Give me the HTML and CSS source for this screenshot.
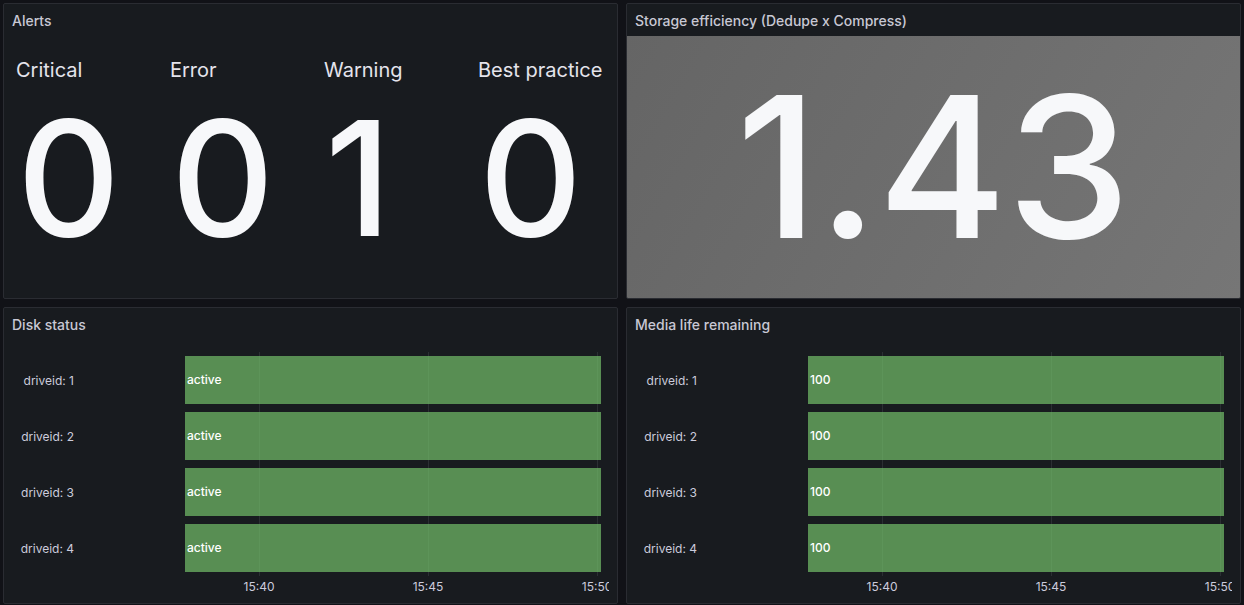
FILE: index.html
```html
<!DOCTYPE html>
<html lang="en">
<head>
<meta charset="utf-8">
<title>Storage dashboard</title>
<link rel="stylesheet" href="styles.css">
</head>
<body>
<main class="dash">
  <section class="panel">
    <header class="panel-head"><h2 class="panel-title">Alerts</h2></header>
    <div class="panel-body stat-grid">
      <div class="stat"><div class="stat-name">Critical</div><div class="stat-val">0</div></div>
      <div class="stat"><div class="stat-name">Error</div><div class="stat-val">0</div></div>
      <div class="stat"><div class="stat-name">Warning</div><div class="stat-val">1</div></div>
      <div class="stat"><div class="stat-name">Best practice</div><div class="stat-val">0</div></div>
    </div>
  </section>

  <section class="panel">
    <header class="panel-head"><h2 class="panel-title">Storage efficiency (Dedupe x Compress)</h2></header>
    <div class="panel-body eff-body">
      <div class="eff-val">1.43</div>
    </div>
  </section>

  <section class="panel">
    <header class="panel-head"><h2 class="panel-title">Disk status</h2></header>
    <div class="panel-body tl-body">
      <div class="tl-plot">
        <div class="tl-labels">
          <div class="tl-label">driveid: 1</div>
          <div class="tl-label">driveid: 2</div>
          <div class="tl-label">driveid: 3</div>
          <div class="tl-label">driveid: 4</div>
        </div>
        <div class="tl-area">
          <div class="tl-rows">
            <div class="grid-line" style="left:17.79%"></div>
            <div class="grid-line" style="left:58.41%"></div>
            <div class="grid-line" style="left:99.04%"></div>
            <div class="tl-row"><div class="tl-bar">active</div></div>
            <div class="tl-row"><div class="tl-bar">active</div></div>
            <div class="tl-row"><div class="tl-bar">active</div></div>
            <div class="tl-row"><div class="tl-bar">active</div></div>
          </div>
          <div class="tl-axis">
            <span class="tick" style="left:17.79%">15:40</span>
            <span class="tick" style="left:58.41%">15:45</span>
            <span class="tick" style="left:99.04%">15:50</span>
          </div>
        </div>
      </div>
    </div>
  </section>

  <section class="panel">
    <header class="panel-head"><h2 class="panel-title">Media life remaining</h2></header>
    <div class="panel-body tl-body">
      <div class="tl-plot">
        <div class="tl-labels">
          <div class="tl-label">driveid: 1</div>
          <div class="tl-label">driveid: 2</div>
          <div class="tl-label">driveid: 3</div>
          <div class="tl-label">driveid: 4</div>
        </div>
        <div class="tl-area">
          <div class="tl-rows">
            <div class="grid-line" style="left:17.79%"></div>
            <div class="grid-line" style="left:58.41%"></div>
            <div class="grid-line" style="left:99.04%"></div>
            <div class="tl-row"><div class="tl-bar">100</div></div>
            <div class="tl-row"><div class="tl-bar">100</div></div>
            <div class="tl-row"><div class="tl-bar">100</div></div>
            <div class="tl-row"><div class="tl-bar">100</div></div>
          </div>
          <div class="tl-axis">
            <span class="tick" style="left:17.79%">15:40</span>
            <span class="tick" style="left:58.41%">15:45</span>
            <span class="tick" style="left:99.04%">15:50</span>
          </div>
        </div>
      </div>
    </div>
  </section>
</main>
</body>
</html>
```

FILE: styles.css
```css
* { box-sizing: border-box; }

html, body {
  margin: 0;
  padding: 0;
  background: #111217;
  font-family: Inter, "Noto Sans", "Liberation Sans", sans-serif;
  color: #ccccdc;
}

.dash {
  display: grid;
  grid-template-columns: 615px 615px;
  grid-template-rows: 296px 297px;
  gap: 8px;
  padding: 3px;
  width: 1244px;
  height: 605px;
}

.panel {
  background: #181b1f;
  border: 1px solid #2a2c32;
  border-radius: 2px;
  display: flex;
  flex-direction: column;
  overflow: hidden;
  min-height: 0;
}

.panel-head {
  height: 32px;
  flex: none;
  display: flex;
  align-items: center;
  padding: 0 8px;
}

.panel-title {
  margin: 0;
  font-size: 14px;
  font-weight: 500;
  color: #c8c8d4;
  white-space: nowrap;
}

.panel-body {
  flex: 1;
  min-height: 0;
  position: relative;
}

/* Alerts stat panel */
.stat-grid {
  display: grid;
  grid-template-columns: 154px 154px 154px 1fr;
  padding: 22px 0 0 12px;
}

.stat {
  display: flex;
  flex-direction: column;
  min-width: 0;
}

.stat-name {
  font-size: 20px;
  line-height: 24px;
  color: #e4e4ec;
  white-space: nowrap;
}

.stat-val {
  margin-top: 26px;
  font-size: 160px;
  line-height: 140px;
  height: 140px;
  font-weight: 500;
  color: #f7f8fa;
  padding-left: 1px;
}

/* Storage efficiency */
.eff-body {
  background: linear-gradient(120deg, #656565, #767676);
  display: flex;
  align-items: center;
  justify-content: center;
}

.eff-val {
  font-size: 197px;
  line-height: 1;
  font-weight: 500;
  color: #f7f8fa;
  padding-bottom: 2px;
}

/* State timeline */
.tl-body {
  padding: 8px;
}

.tl-plot {
  height: 100%;
  overflow: hidden;
  display: grid;
  grid-template-columns: 62px 1fr;
  column-gap: 111px;
  padding: 4px 8px 0 0;
}

.tl-labels {
  display: flex;
  flex-direction: column;
}

.tl-label {
  height: 56px;
  display: flex;
  align-items: center;
  justify-content: flex-end;
  font-size: 12px;
  color: #ccccdc;
  white-space: nowrap;
}

.tl-area {
  display: flex;
  flex-direction: column;
}

.tl-rows {
  position: relative;
  display: flex;
  flex-direction: column;
}

.grid-line {
  position: absolute;
  top: 0;
  bottom: 0;
  width: 1px;
  background: rgba(240, 250, 255, 0.09);
}

.tl-row {
  height: 56px;
  padding: 4px 0;
}

.tl-bar {
  position: relative;
  height: 48px;
  background: rgba(115, 191, 105, 0.7);
  display: flex;
  align-items: center;
  padding: 0 0 1px 2px;
  font-size: 12px;
  font-weight: 500;
  color: #ffffff;
}

.tl-axis {
  position: relative;
  height: 19px;
}

.tick {
  position: absolute;
  top: 4px;
  transform: translateX(-50%);
  font-size: 12px;
  line-height: 14px;
  color: #ccccdc;
  white-space: nowrap;
}
```
